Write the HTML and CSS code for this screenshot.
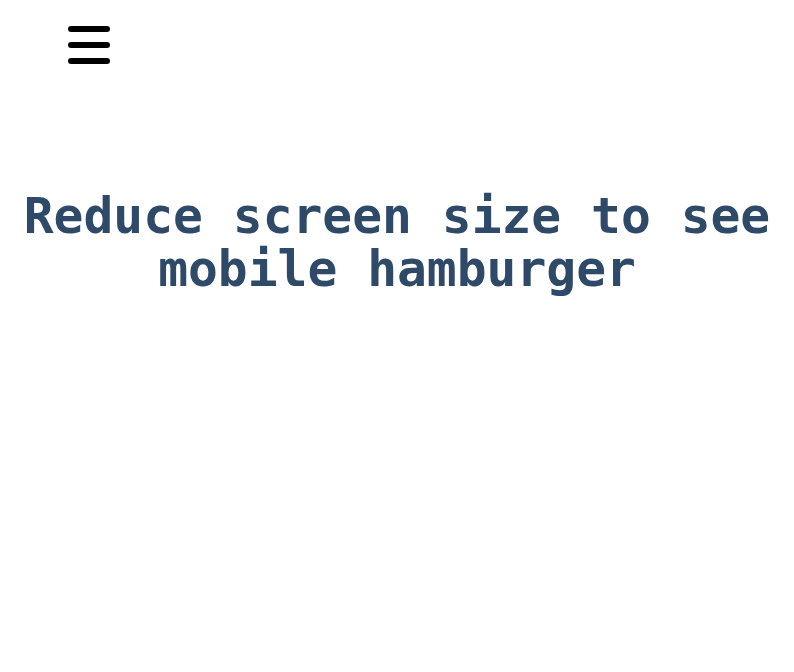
FILE: index.html
```html
<!DOCTYPE html>
<html lang="en">
<head>
<meta charset="utf-8">
<title>Hamburger</title>
<link rel="stylesheet" href="styles.css">
</head>
<body>
<header class="nav">
  <button class="hamburger" aria-label="Menu">
    <span class="bar"></span>
    <span class="bar"></span>
    <span class="bar"></span>
  </button>
</header>
<main class="content">
  <h1 class="title">Reduce screen size to see mobile hamburger</h1>
</main>
</body>
</html>
```
FILE: styles.css
```css
html, body {
  margin: 0;
  padding: 0;
  background: #ffffff;
}
.nav {
  display: flex;
  padding: 26px 0 0 68px;
}
.hamburger {
  display: flex;
  flex-direction: column;
  gap: 10px;
  width: 42px;
  padding: 0;
  margin: 0;
  border: 0;
  background: none;
  cursor: pointer;
}
.bar {
  display: block;
  width: 42px;
  height: 6px;
  border-radius: 3px;
  background: #000000;
}
.content {
  padding: 0 8px;
}
.title {
  margin: 126px 0 0;
  font-family: "DejaVu Sans Mono", "Liberation Mono", monospace;
  font-weight: bold;
  font-size: 49.6px;
  line-height: 53px;
  color: #2e4a68;
  text-align: center;
}
```
